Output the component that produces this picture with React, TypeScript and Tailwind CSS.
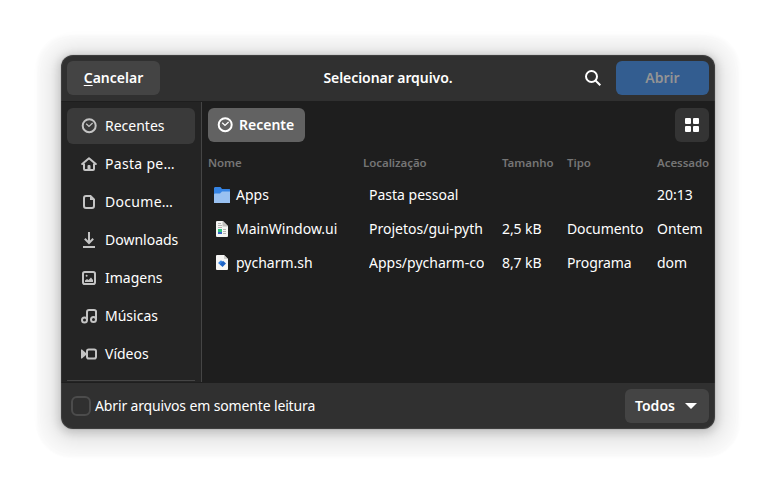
import React from "react";

const stroke = { fill: "none", stroke: "currentColor", strokeWidth: 2 } as const;

function Icon({ children, className = "" }: { children: React.ReactNode; className?: string }) {
  return (
    <svg width="16" height="16" viewBox="0 0 16 16" className={"block shrink-0 " + className}>
      {children}
    </svg>
  );
}

const Clock = () => (
  <>
    <circle cx="8.200" cy="7.700" r="6.500" {...stroke} />
    <path d="M5.200 5.800 8 8.400 11.600 5" {...stroke} strokeWidth={1.3} />
  </>
);
const Home = () => (
  <>
    <path d="M1.200 8 8 2.200 14.800 8" {...stroke} strokeLinecap="round" strokeLinejoin="round" />
    <path d="M3 7.500V13q0 1 1 1h8q1 0 1-1V7.500" {...stroke} />
    <path d="M6.500 14V10q0-1 1-1h1q1 0 1 1v4z" fill="currentColor" />
  </>
);
const Doc = () => (
  <>
    <path d="M5 2h4.500L13 5.500V12q0 2-2 2H5q-2 0-2-2V4q0-2 2-2z" {...stroke} />
    <path d="M9 2v4h4z" fill="currentColor" />
  </>
);
const Download = () => (
  <>
    <path d="M8 0v10.500M3.800 6.800 8 11l4.200-4.200" {...stroke} />
    <path d="M2 15h12" {...stroke} />
  </>
);
const Picture = () => (
  <>
    <rect x="2" y="2" width="12" height="12" rx="1.800" {...stroke} />
    <path d="M4 12V10.500L6 9l1.500 1L10 7.500l2 2.500v2z" fill="currentColor" />
    <circle cx="5.600" cy="5.800" r="1" fill="currentColor" />
  </>
);
const Music = () => (
  <>
    <circle cx="3.500" cy="12" r="2.500" {...stroke} />
    <circle cx="12.500" cy="11.500" r="2.500" {...stroke} />
    <path d="M6 12V4q0-2 2-2h5q2 0 2 1.500V11.500" {...stroke} />
  </>
);
const Video = () => (
  <>
    <rect x="6" y="3.500" width="9" height="9" rx="1.800" {...stroke} />
    <path d="M0 3.500v9h1L5 9V7L1 3.500z" fill="currentColor" />
  </>
);

const places = [
  { label: "Recentes", icon: <Clock />, active: true },
  { label: "Pasta pe…", icon: <Home />, cut: true },
  { label: "Docume…", icon: <Doc />, cut: true },
  { label: "Downloads", icon: <Download /> },
  { label: "Imagens", icon: <Picture /> },
  { label: "Músicas", icon: <Music /> },
  { label: "Vídeos", icon: <Video /> },
];

const FolderIcon = () => (
  <Icon>
    <path d="M0 1.500Q0 0 1 0h5.500l1.500 2h7.500q.500 0 .500.500V16H0z" fill="#3584e4" />
    <path d="M0 7.500 Q0 6.500 1 6.500H6L8 4.500h8V16H0z" fill="#99c1f1" />
  </Icon>
);
const UiFileIcon = () => (
  <Icon>
    <path d="M2 1q0-1 1-1h6l5 5v10q0 1-1 1H3q-1 0-1-1z" fill="#f4f4f2" />
    <path d="M8.500 0 14 5.500H8.500z" fill="#c0bfbc" />
    <path d="M4 2.500h3M4 4.500h4M4 6.500h4M9 8.500h3M9 10.500h3M9 12.500h3" stroke="#b5b3b0" />
    <path d="M4 8h4v3H4z" fill="#2ec27e" />
    <path d="M4 11h4v2H4z" fill="#3566c4" />
  </Icon>
);
const ScriptIcon = () => (
  <Icon>
    <path d="M2 1q0-1 1-1h7l4 4v10q0 1-1 1H3q-1 0-1-1z" fill="#f6f5f4" />
    <path d="M10 0 14 4H10z" fill="#d0cfcc" />
    <path d="M7 5.200 9.500 7.500 7 10.500 4 8z" fill="#3584e4" />
    <path d="M9 5.800 12 8.500 8.500 12 6 9.500z" fill="#1c61c4" />
  </Icon>
);

const files = [
  { name: "Apps", icon: <FolderIcon />, place: "Pasta pessoal", size: "", kind: "", when: "20:13" },
  { name: "MainWindow.ui", icon: <UiFileIcon />, place: "Projetos/gui-pyth", size: "2,5 kB", kind: "Documento", when: "Ontem" },
  { name: "pycharm.sh", icon: <ScriptIcon />, place: "Apps/pycharm-co", size: "8,7 kB", kind: "Programa", when: "dom" },
];

const columns = "grid grid-cols-[155px_139px_65px_90px_58px] items-center pl-1.5";

export default function App() {
  return (
    <div className="flex h-[496px] w-[776px] items-start bg-white pt-[55px] pl-[61px] font-['Noto_Sans',sans-serif] text-[14px] leading-[20px] text-white">
      <div className="relative flex h-[374px] w-[654px] flex-col overflow-hidden rounded-[12px] bg-[#303030] shadow-[0_2px_8px_2px_rgba(0,0,0,0.15),0_3px_20px_10px_rgba(0,0,0,0.10),0_4px_3px_24px_rgba(0,0,0,0.018),0_0_0_1px_rgba(0,0,0,0.05)]">
        <header className="grid h-[46px] shrink-0 grid-cols-[1fr_auto_1fr] items-center px-1.5">
          <button className="h-[34px] w-[93px] justify-self-start rounded-md bg-[#444444] font-semibold">
            <span className="underline decoration-1 underline-offset-2">C</span>ancelar
          </button>
          <h1 className="font-semibold tracking-[-0.06px]">Selecionar arquivo.</h1>
          <div className="flex items-center gap-[15px] justify-self-end">
            <Icon>
              <circle cx="6.500" cy="6.500" r="5.500" {...stroke} />
              <path d="M10.500 10.500 15.300 15.300" {...stroke} />
            </Icon>
            <button className="h-[34px] w-[93px] rounded-md bg-[#335d90] font-semibold text-[#949494]">Abrir</button>
          </div>
        </header>

        <div className="flex h-[282px] shrink-0 border-y border-[#1e1e1e] bg-[#1e1e1e]">
          <nav className="flex w-[141px] shrink-0 flex-col gap-0.5 border-r border-[#454545] bg-[#242424] px-1.5 pt-1.5">
            {places.map((p) => (
              <div
                key={p.label}
                className={"flex h-9 shrink-0 items-center gap-2 rounded-md pl-3.5 " + (p.active ? "bg-[#3a3a3a]" : "")}
              >
                <Icon className="text-[#c4c4c4]">{p.icon}</Icon>
                <span className={p.cut ? "tracking-[0.3px]" : ""}>{p.label}</span>
              </div>
            ))}
            <div className="mt-1.5 h-px shrink-0 bg-[#454545]" />
          </nav>

          <main className="flex min-w-0 flex-1 flex-col">
            <div className="flex items-center justify-between px-1.5 pt-1.5">
              <div className="flex h-[34px] w-[97px] items-center gap-1.5 rounded-md bg-[#626262] pl-[9px] font-semibold">
                <Icon>
                  <Clock />
                </Icon>
                Recente
              </div>
              <button className="flex size-[34px] items-center justify-center rounded-md bg-[#343434]">
                <Icon>
                  <g fill="currentColor">
                    <rect x="1" y="1" width="6" height="6" rx="1" />
                    <rect x="9" y="1" width="6" height="6" rx="1" />
                    <rect x="1" y="9" width="6" height="6" rx="1" />
                    <rect x="9" y="9" width="6" height="6" rx="1" />
                  </g>
                </Icon>
              </button>
            </div>
            <div className={columns + " h-9 pt-1.5 text-[11.500px] font-semibold tracking-[-0.06px] text-[#757575]"}>
              <span>Nome</span>
              <span>Localização</span>
              <span>Tamanho</span>
              <span>Tipo</span>
              <span>Acessado</span>
            </div>
            {files.map((f) => (
              <div key={f.name} className={columns + " h-[34px]"}>
                <span className="flex items-center gap-1.5 pl-1.5">
                  {f.icon}
                  <span>{f.name}</span>
                </span>
                <span className="ml-1.5 w-[115px] overflow-hidden whitespace-nowrap">{f.place}</span>
                <span className="tracking-[-0.1px]">{f.size}</span>
                <span className="tracking-[-0.1px]">{f.kind}</span>
                <span>{f.when}</span>
              </div>
            ))}
          </main>
        </div>

        <footer className="flex flex-1 items-center justify-between pr-1.5 pl-2.5">
          <label className="flex items-center gap-1">
            <span className="size-5 rounded-md border-2 border-[#4c4c4c]" />
            <span className="tracking-[-0.14px]">Abrir arquivos em somente leitura</span>
          </label>
          <button className="flex h-[34px] w-[84px] items-center gap-2.5 rounded-md bg-[#444444] pl-2.5 font-semibold">
            Todos
            <svg width="12" height="6" viewBox="0 0 12 6" className="block">
              <path d="M0 0h12L6 6z" fill="currentColor" />
            </svg>
          </button>
        </footer>
        <div className="pointer-events-none absolute inset-0 rounded-[12px] border border-white/[0.07]" />
      </div>
    </div>
  );
}
